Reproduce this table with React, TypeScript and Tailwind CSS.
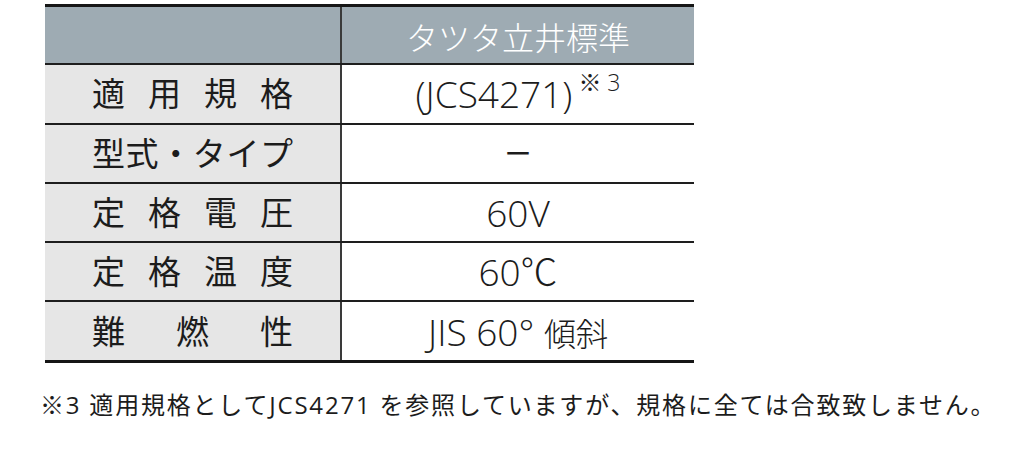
const font = { fontFamily: '"Open Sans", "Noto Sans CJK JP", sans-serif' };

type Row = { label: string[]; value: React.ReactNode };

const rows: Row[] = [
  {
    label: ["適", "用", "規", "格"],
    value: (
      <span className="flex items-start">
        <span>(JCS4271)</span>
        <span className="ml-[6px] mt-[-7px] text-[23px] leading-[28px]">※ 3</span>
      </span>
    ),
  },
  { label: ["型", "式", "・", "タ", "イ", "プ"], value: <span className="text-[27px] font-normal">ー</span> },
  { label: ["定", "格", "電", "圧"], value: "60V" },
  { label: ["定", "格", "温", "度"], value: "60℃" },
  {
    label: ["難", "燃", "性"],
    value: (
      <span>
        JIS 60° <span className="text-[32px]">傾斜</span>
      </span>
    ),
  },
];

export default function App() {
  return (
    <div className="w-[1035px] h-[457px] bg-white text-[#1c1c1c] pt-[4px]" style={font}>
      <div className="ml-[45px] w-[649px] border-t-[3px] border-b-[3px] border-[#161616]">
        <div className="flex h-[58.3px] bg-[#9eabb3] border-b-2 border-[#1e1e1e]">
          <div className="w-[295px]" />
          <div className="flex-1 border-l-2 border-[#3a3a3a] flex items-center justify-center pt-[5px] text-white text-[32px] font-light">
            タツタ立井標準
          </div>
        </div>
        {rows.map((r, i) => (
          <div
            key={i}
            className={`flex ${i < rows.length - 1 ? "h-[59.3px] border-b-2 border-[#1e1e1e]" : "h-[57.5px]"}`}
          >
            <div className="w-[295px] bg-[#e6e6e6] flex items-center justify-center">
              <div className="w-[201px] flex justify-between text-[33px] leading-none">
                {r.label.map((c, j) => (
                  <span key={j}>{c}</span>
                ))}
              </div>
            </div>
            <div className="flex-1 border-l-2 border-[#3a3a3a] flex items-center justify-center text-[37px] leading-none font-light">
              {r.value}
            </div>
          </div>
        ))}
      </div>
      <p className="mt-[24px] ml-[40px] text-[24px] leading-[36px] tracking-[1.8px] whitespace-nowrap">
        ※3 適用規格としてJCS4271 を参照していますが、規格に全ては合致致しません。
      </p>
    </div>
  );
}
